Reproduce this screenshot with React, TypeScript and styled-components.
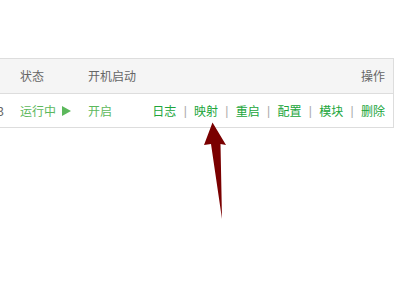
import React from "react";
import styled, { createGlobalStyle } from "styled-components";

const Global = createGlobalStyle`
  html, body { margin: 0; padding: 0; background: #fff; }
  body { font-family: "Noto Sans CJK SC", "Noto Sans", sans-serif; font-size: 12px; }
`;

const Page = styled.div`
  position: relative;
  width: 399px;
  height: 288px;
  overflow: hidden;
  padding-top: 58px;
  box-sizing: border-box;
`;

const Table = styled.div`
  margin-left: -40px;
  width: 434px;
  border-top: 1px solid #ddd;
  border-right: 1px solid #ddd;
  box-sizing: border-box;
`;

const Row = styled.div<{ $head?: boolean }>`
  display: flex;
  align-items: center;
  height: ${(p) => (p.$head ? 35 : 34)}px;
  box-sizing: border-box;
  border-bottom: 1px solid #ddd;
  background: ${(p) => (p.$head ? "#f5f5f5" : "#fff")};
  color: #666;
  line-height: 1;
`;

const Cell = styled.div<{ $w?: number; $right?: boolean; $grow?: boolean; $color?: string }>`
  ${(p) => (p.$w ? `width: ${p.$w}px;` : "")}
  ${(p) => (p.$grow ? "flex: 1;" : "")}
  flex-shrink: 0;
  display: flex;
  align-items: center;
  justify-content: ${(p) => (p.$right ? "flex-end" : "flex-start")};
  box-sizing: border-box;
  color: ${(p) => p.$color || "#666"};
  white-space: nowrap;
`;

const FirstCell = styled(Cell)`
  padding-right: 16px;
  color: #666;
`;

const ActionCell = styled(Cell)`
  padding-right: 8px;
`;

const Play = styled.svg`
  margin-left: 6px;
  display: block;
`;

const Link = styled.span`
  color: #20a53a;
`;

const Sep = styled.span`
  color: #aaa;
  margin: 0 7.3px;
  font-family: "Liberation Sans", sans-serif;
`;

const Arrow = styled.svg`
  position: absolute;
  left: 0;
  top: 0;
  pointer-events: none;
`;

const actions = ["日志", "映射", "重启", "配置", "模块", "删除"];

export default function App() {
  return (
    <Page>
      <Global />
      <Table>
        <Row $head>
          <FirstCell $w={60} $right />
          <Cell $w={68}>状态</Cell>
          <Cell $grow>开机启动</Cell>
          <ActionCell $right>操作</ActionCell>
        </Row>
        <Row>
          <FirstCell $w={60} $right>2.3</FirstCell>
          <Cell $w={68} $color="#5cb85c">
            运行中
            <Play width="9" height="10" viewBox="0 0 9 10">
              <polygon points="0,0 9,5 0,10" fill="#5cb85c" />
            </Play>
          </Cell>
          <Cell $grow $color="#5cb85c">开启</Cell>
          <ActionCell $right>
            {actions.map((a, i) => (
              <React.Fragment key={a}>
                {i > 0 && <Sep>|</Sep>}
                <Link>{a}</Link>
              </React.Fragment>
            ))}
          </ActionCell>
        </Row>
      </Table>
      <Arrow width="399" height="288" viewBox="0 0 399 288">
        <polygon
          points="212.5,122.5 226,145 220.5,144 222,219 211,144 204,145"
          fill="#7a0000"
        />
      </Arrow>
    </Page>
  );
}
